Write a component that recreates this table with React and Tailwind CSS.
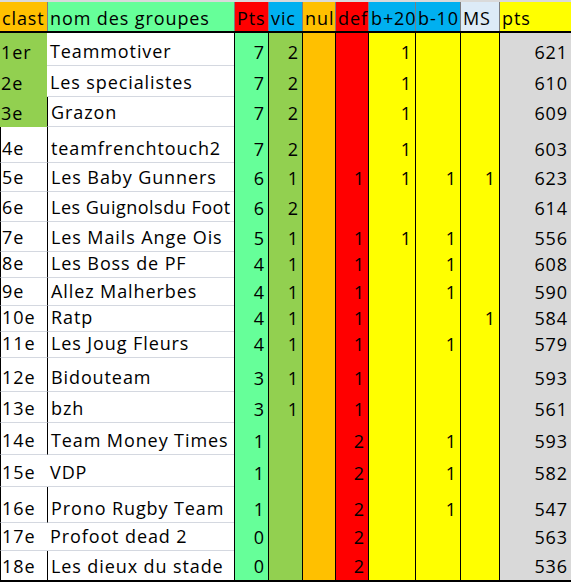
const font = { fontFamily: '"Open Sans", "Noto Sans", sans-serif' }

const columns = [
  { key: 'rank', label: 'clast', w: 'w-[47px]', head: 'bg-[#ffc000]', cell: 'bg-white', align: 'left' },
  { key: 'name', label: 'nom des groupes', w: 'w-[187px]', head: 'bg-[#66ff99]', cell: 'bg-white', align: 'left' },
  { key: 'pts', label: 'Pts', w: 'w-[34px]', head: 'bg-[#ff0000]', cell: 'bg-[#66ff99]', align: 'right' },
  { key: 'vic', label: 'vic', w: 'w-[34px]', head: 'bg-[#00b0f0]', cell: 'bg-[#92d050]', align: 'right' },
  { key: 'nul', label: 'nul', w: 'w-[33px]', head: 'bg-[#ffc000]', cell: 'bg-[#ffc000]', align: 'right' },
  { key: 'def', label: 'def', w: 'w-[33px]', head: 'bg-[#ff0000]', cell: 'bg-[#ff0000]', align: 'right' },
  { key: 'b20', label: 'b+20', w: 'w-[47px]', head: 'bg-[#00b0f0]', cell: 'bg-[#ffff00]', align: 'right' },
  { key: 'b10', label: 'b-10', w: 'w-[45px]', head: 'bg-[#00b0f0]', cell: 'bg-[#ffff00]', align: 'right' },
  { key: 'ms', label: 'MS', w: 'w-[39px]', head: 'bg-[#ddebf7]', cell: 'bg-[#ffff00]', align: 'right' },
  { key: 'total', label: 'pts', w: 'w-[72px]', head: 'bg-[#ffff00]', cell: 'bg-[#d9d9d9]', align: 'right' },
]

// [rang, nom, pts, vic, nul, def, b+20, b-10, MS, total, hauteur]
const rows = [
  ['1er', 'Teammotiver', 7, 2, '', '', 1, '', '', 621, 'h-[33px]'],
  ['2e', 'Les specialistes', 7, 2, '', '', 1, '', '', 610, 'h-[31px]'],
  ['3e', 'Grazon', 7, 2, '', '', 1, '', '', 609, 'h-[30px]'],
  ['4e', 'teamfrenchtouch2', 7, 2, '', '', 1, '', '', 603, 'h-[36px]'],
  ['5e', 'Les Baby Gunners', 6, 1, '', 1, 1, 1, 1, 623, 'h-[29px]'],
  ['6e', 'Les Guignolsdu Foot', 6, 2, '', '', '', '', '', 614, 'h-[30px]'],
  ['7e', 'Les Mails Ange Ois', 5, 1, '', 1, 1, 1, '', 556, 'h-[30px]'],
  ['8e', 'Les Boss de PF', 4, 1, '', 1, '', 1, '', 608, 'h-[26px]'],
  ['9e', 'Allez Malherbes', 4, 1, '', 1, '', 1, '', 590, 'h-[28px]'],
  ['10e', 'Ratp', 4, 1, '', 1, '', '', 1, 584, 'h-[26px]'],
  ['11e', 'Les Joug Fleurs', 4, 1, '', 1, '', 1, '', 579, 'h-[26px]'],
  ['12e', 'Bidouteam', 3, 1, '', 1, '', '', '', 593, 'h-[34px]'],
  ['13e', 'bzh', 3, 1, '', 1, '', '', '', 561, 'h-[31px]'],
  ['14e', 'Team Money Times', 1, '', '', 2, '', 1, '', 593, 'h-[32px]'],
  ['15e', 'VDP', 1, '', '', 2, '', 1, '', 582, 'h-[32px]'],
  ['16e', 'Prono Rugby Team', 1, '', '', 2, '', 1, '', 547, 'h-[36px]'],
  ['17e', 'Profoot dead 2', 0, '', '', 2, '', '', '', 563, 'h-[28px]'],
  ['18e', 'Les dieux du stade', 0, '', '', 2, '', '', '', 536, 'h-[29px]'],
]

function Cell({ col, index, rowIndex, value, height }) {
  const podium = index === 0 && rowIndex < 3
  const white = index < 2 && !podium
  const last = rowIndex === rows.length - 1
  let border = ''
  if (index >= 2) border += ' border-l border-l-black'
  if (index === 1 && rowIndex >= 2 && rowIndex !== 14 && rowIndex !== 16) border += ' border-l border-l-black'
  if (index === 0 && rowIndex >= 3) border += ' border-l border-l-black'
  if (white && !last) border += ' border-b border-b-[#d4d8e0]'
  // le nom le plus long touche le bord de la colonne
  const tracking = index === 1 && String(value).length > 18 ? 'tracking-[0.5px]' : 'tracking-[0.9px]'
  return (
    <div
      className={`${col.w} ${height} ${podium ? 'bg-[#92d050]' : col.cell}${border} flex items-end pb-[3px] text-[18px] leading-[22px] ${tracking} text-black whitespace-nowrap overflow-hidden ${
        col.align === 'right' ? 'justify-end pr-[3px]' : index === 1 ? 'pl-[3px]' : 'pl-[1px]'
      }`}
    >
      {value}
    </div>
  )
}

export default function App() {
  return (
    <div className="w-[571px] h-[583px] bg-white overflow-hidden" style={font}>
      <div className="border-t-2 border-t-[#dadada] flex border-b-2 border-b-black">
        {columns.map((col, i) => (
          <div
            key={col.key}
            className={`${col.w} h-[29px] ${col.head} ${i > 0 ? 'border-l border-l-[#7f7f7f]' : ''} flex items-end pb-[2px] pl-[2px] text-[18px] leading-[22px] tracking-[0.9px] text-black whitespace-nowrap overflow-hidden`}
          >
            {col.label}
          </div>
        ))}
      </div>
      <div className="flex flex-col border-b-2 border-b-black w-[571px]">
        {rows.map((row, r) => (
          <div key={row[0]} className="flex">
            {columns.map((col, i) => (
              <Cell key={col.key} col={col} index={i} rowIndex={r} value={row[i]} height={row[10]} />
            ))}
          </div>
        ))}
      </div>
    </div>
  )
}
